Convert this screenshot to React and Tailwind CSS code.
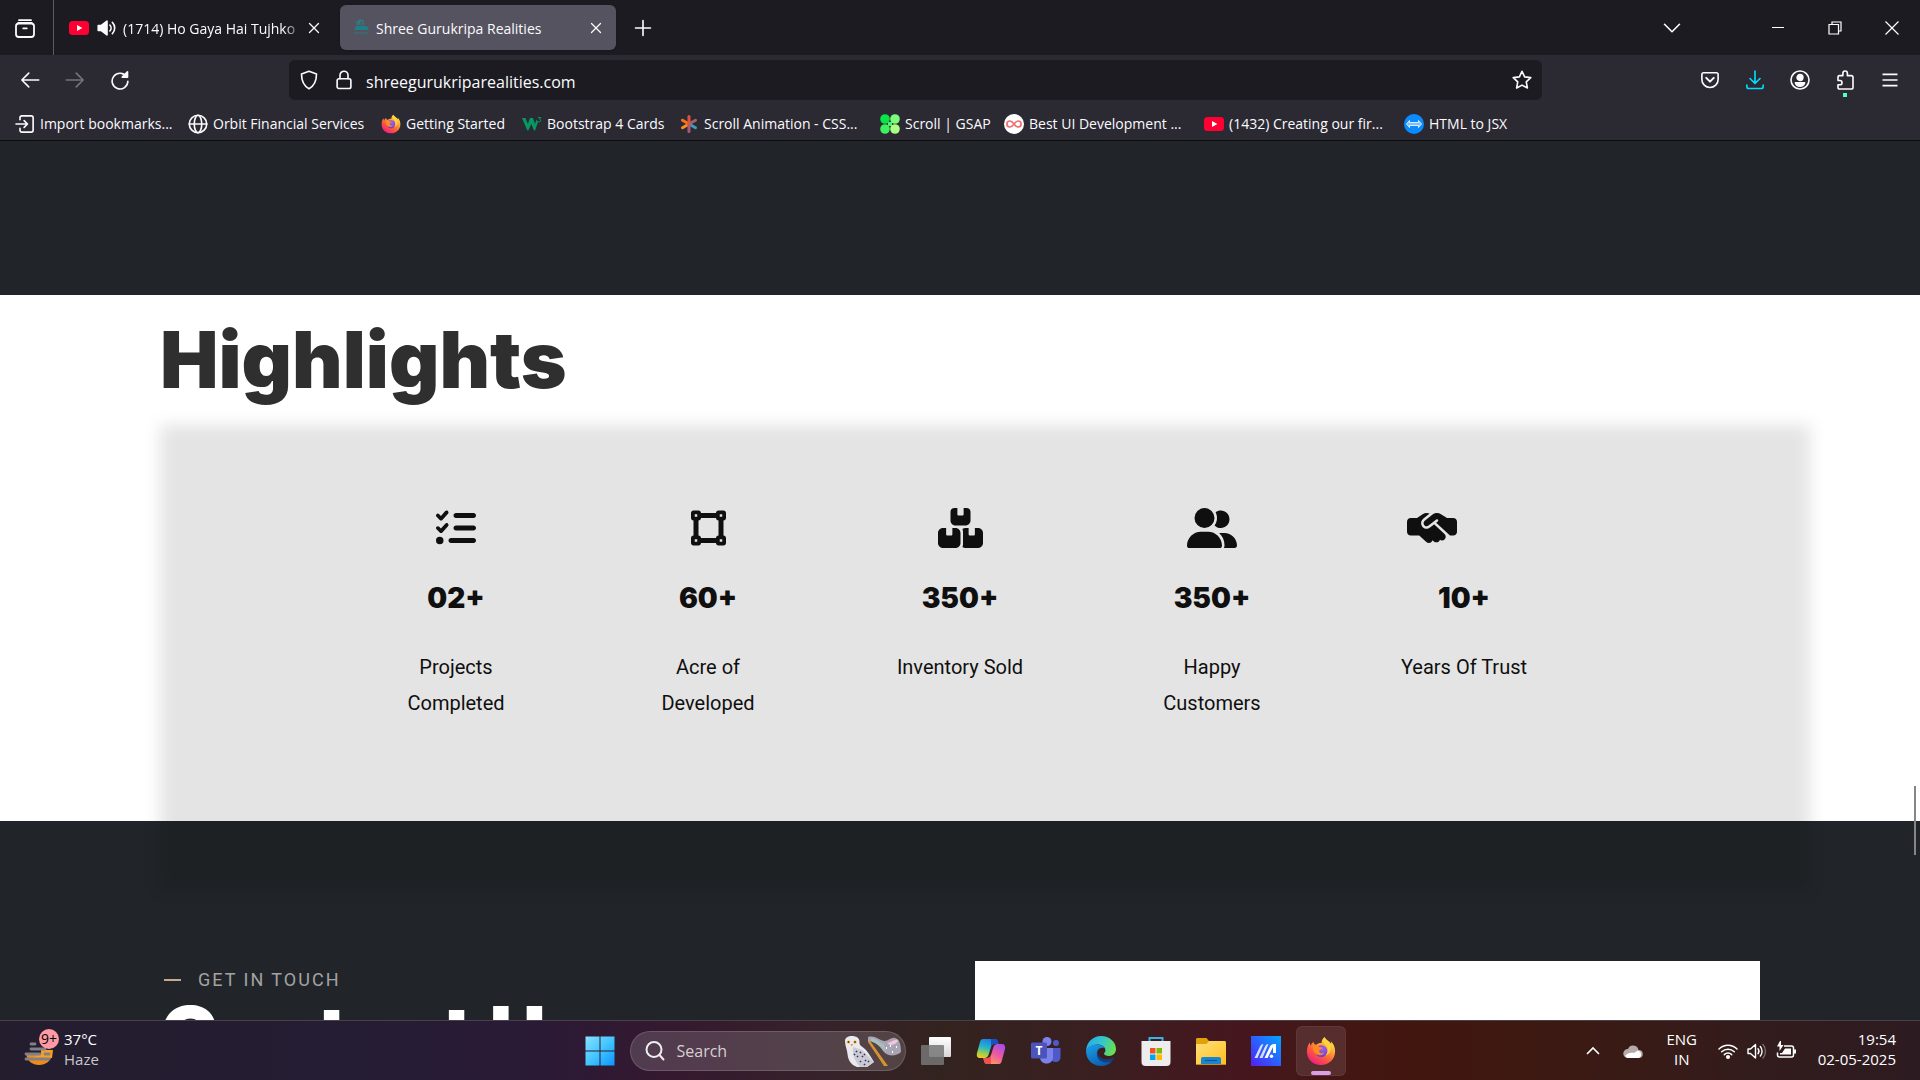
import React from "react";
import {
  FaListCheck,
  FaVectorSquare,
  FaBoxesStacked,
  FaUserGroup,
  FaHandshakeSimple,
} from "react-icons/fa6";

const line = {
  fill: "none",
  stroke: "currentColor",
  strokeWidth: 1.3,
  strokeLinecap: "round",
  strokeLinejoin: "round",
};

function Icon({ children, className = "size-5", ...rest }) {
  return (
    <svg viewBox="0 0 16 16" className={`shrink-0 ${className}`} aria-hidden="true" {...line} {...rest}>
      {children}
    </svg>
  );
}

function YoutubeIcon() {
  return (
    <svg viewBox="0 0 20 20" className="size-5 shrink-0" aria-hidden="true">
      <rect x="0" y="3" width="20" height="14" rx="3.5" fill="#ff0033" />
      <path d="M8 7l5.4 3L8 13z" fill="#fff" />
    </svg>
  );
}

function FirefoxIcon({ id, className = "size-5" }) {
  return (
    <svg viewBox="0 0 30 30" className={`shrink-0 ${className}`} aria-hidden="true">
      <defs>
        <linearGradient id={`${id}-body`} x1="0.85" y1="0.05" x2="0.25" y2="0.95">
          <stop offset="0" stopColor="#fff44f" />
          <stop offset="0.35" stopColor="#ffa436" />
          <stop offset="0.65" stopColor="#ff5a3c" />
          <stop offset="1" stopColor="#f0207f" />
        </linearGradient>
        <radialGradient id={`${id}-globe`} cx="0.6" cy="0.3" r="0.8">
          <stop offset="0" stopColor="#a45cf5" />
          <stop offset="1" stopColor="#5b3fc9" />
        </radialGradient>
      </defs>
      <path
        d="M18.5 1c-2 1.600-3 3.800-3 6-2.200-.1-4 .6-5.300 1.800C8.800 8.600 7.700 7.700 7.500 6 6 7 5 8.400 4.700 10L3.600 6.500C1.900 9 .9 12 .9 15.700.9 23.500 7.200 29 15 29s14.100-5.800 14.100-13.600c0-4.400-1.500-7.600-4.300-10.200.4 1.200.5 2 .4 2.900C23.500 4.800 20 4 18.500 1z"
        fill={`url(#${id}-body)`}
      />
      <circle cx="15.300" cy="15.300" r="6" fill={`url(#${id}-globe)`} />
      <path d="M7 10.500c2.500-1.200 5-.6 6.500.6 1.200.3 2.400.3 3 .7-.3 1.500-2.600 1.800-3.200 2.600-.4 2.400 2 3.600 5 2.400-1 2.700-6.200 3.600-9 .8-1.900-1.900-2.600-4.600-2.300-7.100z" fill="#ff8a1f" />
      <path d="M20 9c2.300 3 2.700 7.700-.4 10.400 4.800-1 6.300-6.400 4.300-10.600C22.600 6 19.500 4 18.900 2.400 16.900 5 18 7 20 9z" fill="#ffd43d" />
    </svg>
  );
}

function ImportIcon() {
  return (
    <Icon>
      <path d="M4 4.500V3a1.500 1.500 0 0 1 1.500-1.500h7.500A1.500 1.500 0 0 1 14.500 3v10a1.500 1.500 0 0 1-1.500 1.500H5.500A1.500 1.500 0 0 1 4 13v-1.500" />
      <path d="M.8 8h9M7.300 5.300 10 8l-2.700 2.700" />
    </Icon>
  );
}

function GlobeIcon() {
  return (
    <Icon>
      <circle cx="8" cy="8" r="7" />
      <ellipse cx="8" cy="8" rx="3" ry="7" />
      <path d="M1 8h14" />
    </Icon>
  );
}

function W3Icon() {
  return (
    <svg viewBox="0 0 20 20" className="size-5 shrink-0" aria-hidden="true">
      <path d="M0 4h3.500l2.300 6L8 4h3l2 6 1.500-4.500L16 8l-3 8.500h-1L9.300 10l-3 6.500h-1z" fill="#059862" />
      <path d="M16 3.500h2.800l-1.300 1.800c1.700.2 1.600 2.600-.3 2.600-.8 0-1.300-.3-1.500-.8" fill="none" stroke="#059862" strokeWidth="1" />
    </svg>
  );
}

function AsteriskIcon() {
  return (
    <svg viewBox="0 0 20 20" className="size-5 shrink-0" fill="none" strokeWidth="3" strokeLinecap="round" aria-hidden="true">
      <path d="M10 10 3.500 13.800" stroke="#ff8a1f" />
      <path d="M10 10 3.500 6.200" stroke="#f97316" />
      <path d="M10 10 16.500 6.200" stroke="#a0616f" />
      <path d="M10 10 16.500 13.800" stroke="#3b9fb5" />
      <path d="M10 10v7.500" stroke="#a75a78" />
      <path d="M10 2.500V10" stroke="#e0503f" />
    </svg>
  );
}

function GsapIcon() {
  return (
    <svg viewBox="0 0 20 20" className="size-5 shrink-0" aria-hidden="true">
      <path d="M8 8h4v4H8z" fill="#4df06a" />
      <circle cx="5" cy="5" r="4.800" fill="#0ae448" />
      <circle cx="15" cy="5" r="4.800" fill="#7dfb7a" />
      <circle cx="5" cy="15" r="4.800" fill="#3df060" />
      <circle cx="15" cy="15" r="4.800" fill="#abff84" />
    </svg>
  );
}

function InfinityIcon() {
  return (
    <svg viewBox="0 0 20 20" className="size-5 shrink-0" aria-hidden="true">
      <circle cx="10" cy="10" r="10" fill="#fff" />
      <path d="M10 10C8.600 8 7.400 7 5.900 7a3 3 0 0 0 0 6c1.500 0 2.700-1 4.100-3s2.600-3 4.100-3a3 3 0 0 1 0 6c-1.500 0-2.700-1-4.100-3z" fill="none" stroke="#f26d6d" strokeWidth="1.700" />
    </svg>
  );
}

function JsxIcon() {
  return (
    <svg viewBox="0 0 20 20" className="size-5 shrink-0" aria-hidden="true">
      <circle cx="10" cy="10" r="10" fill="#0a8cff" />
      <path d="M5.500 6.500 2.500 10l3 3.500v-2h9v2l3-3.500-3-3.500v2h-9z" fill="#7cc0ff" stroke="#fff" strokeWidth=".8" />
    </svg>
  );
}

const bookmarks = [
  { label: "Import bookmarks...", icon: <ImportIcon />, width: "w-[173px]" },
  { label: "Orbit Financial Services", icon: <GlobeIcon />, width: "w-[193px]" },
  { label: "Getting Started", icon: <FirefoxIcon id="ff-small" />, width: "w-[141px]" },
  { label: "Bootstrap 4 Cards", icon: <W3Icon />, width: "w-[157px]" },
  { label: "Scroll Animation - CSS...", icon: <AsteriskIcon />, width: "w-[201px]" },
  { label: "Scroll | GSAP", icon: <GsapIcon />, width: "w-[124px]" },
  { label: "Best UI Development ...", icon: <InfinityIcon />, width: "w-[200px]" },
  { label: "(1432) Creating our fir...", icon: <YoutubeIcon />, width: "w-[200px]" },
  { label: "HTML to JSX", icon: <JsxIcon />, width: "w-[120px]" },
];

function TabBar() {
  return (
    <div className="flex h-[55px] items-center bg-[#1c1b22]">
      <button aria-label="Recent browsing" className="flex w-[53px] justify-center pr-1">
        <Icon className="size-6" strokeWidth="1.200">
          <path d="M4 2.800h8" />
          <rect x="2" y="5" width="12" height="9" rx="1.800" />
          <path d="M3.500 4.600h9M6.800 8.200h2.400" />
        </Icon>
      </button>
      <div className="h-full w-px bg-[#5b5b66]" />
      <div className="flex h-[45px] w-[276px] items-center pr-1 pl-[15px]">
        <YoutubeIcon />
        <button aria-label="Mute tab" className="ml-2">
          <Icon>
            <path d="M1 6v4h2.500L8 13.500v-11L3.500 6z" fill="currentColor" />
            <path d="M10.300 5.600a3.500 3.500 0 0 1 0 4.800M12.300 3.500a6.400 6.400 0 0 1 0 9" />
          </Icon>
        </button>
        <span className="ml-[6px] w-[179px] pt-0.5 whitespace-nowrap [mask-image:linear-gradient(to_right,black_90%,transparent)]">
          (1714) Ho Gaya Hai Tujhko
        </span>
        <button aria-label="Close tab" className="-mr-1 ml-1">
          <Icon className="size-4"><path d="m3.500 3.500 9 9m0-9-9 9" /></Icon>
        </button>
      </div>
      <div className="ml-[10px] flex h-[45px] w-[276px] items-center rounded-md bg-[#55535f] pr-3 pl-3 shadow">
        <svg viewBox="0 0 18 20" className="h-5 w-[18px] shrink-0" aria-hidden="true">
          <path d="M5 7V4l2-1v4M8 7V2l3 1v4" fill="none" stroke="#2b7f86" strokeWidth="1.300" />
          <path d="M2 12 4 8h11l2 4z" fill="#1f7f86" />
          <path d="M2 15h14" stroke="#3c6a74" strokeWidth="1.500" />
        </svg>
        <span className="ml-[6px] grow pt-0.5 whitespace-nowrap">Shree Gurukripa Realities</span>
        <button aria-label="Close tab">
          <Icon className="size-4"><path d="m3.500 3.500 9 9m0-9-9 9" /></Icon>
        </button>
      </div>
      <button aria-label="New tab" className="ml-[17px]">
        <Icon><path d="M8 2v12M2 8h12" /></Icon>
      </button>
      <div className="ml-auto flex items-center">
        <button aria-label="List all tabs" className="mr-[49px] flex w-[56px] justify-center">
          <Icon><path d="m2 5 6 6 6-6" /></Icon>
        </button>
        <button aria-label="Minimize" className="flex w-[57px] justify-center">
          <svg viewBox="0 0 14 14" className="size-[14px]" aria-hidden="true"><path d="M1 6.500h12" stroke="#fff" /></svg>
        </button>
        <button aria-label="Restore" className="flex w-[57px] justify-center">
          <svg viewBox="0 0 14 14" className="size-[14px]" fill="none" stroke="#fff" strokeWidth="1.200" aria-hidden="true">
            <path d="M1 3.500h9.500V13H1zM4 3.500V1h9v9h-2.500" />
          </svg>
        </button>
        <button aria-label="Close window" className="flex w-[57px] justify-center">
          <svg viewBox="0 0 14 14" className="size-[14px]" stroke="#fff" strokeWidth="1.200" aria-hidden="true"><path d="m.5.5 13 13m0-13-13 13" /></svg>
        </button>
      </div>
    </div>
  );
}

function NavBar() {
  return (
    <div className="flex h-[50px] items-center justify-between">
      <div className="flex w-[289px] shrink-0 items-center gap-[25px] pl-5">
        <button aria-label="Back">
          <Icon><path d="M15 8H1.500M7 2.500 1.500 8 7 13.500" /></Icon>
        </button>
        <button aria-label="Forward" disabled className="text-[#74737c]">
          <Icon><path d="M1 8h13.500M9 2.500 14.500 8 9 13.500" /></Icon>
        </button>
        <button aria-label="Reload">
          <Icon>
            <path d="M13.300 5.500A6.300 6.300 0 1 0 14.300 9" />
            <path d="M14 1.500v4.200H9.800z" fill="currentColor" />
          </Icon>
        </button>
      </div>
      <div className="flex h-10 grow items-center rounded-md bg-[#1c1b22] px-[10px]">
        <button aria-label="Tracking protection">
          <Icon><path d="M8 1 14 3.200C14 9 12.500 12.500 8 15 3.500 12.500 2 9 2 3.200z" /></Icon>
        </button>
        <button aria-label="Site information" className="ml-[15px]">
          <Icon>
            <rect x="2.500" y="7" width="11" height="7.800" rx="1.500" />
            <path d="M4.800 7V4.200a3.200 3.200 0 0 1 6.400 0V7" />
          </Icon>
        </button>
        <input
          aria-label="Address"
          defaultValue="shreegurukriparealities.com"
          className="ml-3 min-w-0 grow bg-transparent pt-1 text-base outline-none"
        />
        <button aria-label="Bookmark this page">
          <Icon>
            <path d="m8 1 2.100 4.500 4.900.6-3.600 3.400.9 4.900L8 12.100l-4.300 2.300.9-4.900L1 6.100l4.900-.6z" />
          </Icon>
        </button>
      </div>
      <div className="flex w-[378px] shrink-0 items-center justify-end gap-[25px] pr-5">
        <button aria-label="Save to Pocket">
          <Icon>
            <path d="M1.500 3.500A1.300 1.300 0 0 1 2.800 2.200h10.400a1.300 1.300 0 0 1 1.300 1.300V7.500a6.500 6.500 0 0 1-13 0z" />
            <path d="m5 6.300 3 3 3-3" strokeWidth="1.600" />
          </Icon>
        </button>
        <button aria-label="Downloads" className="text-[#00ddff]">
          <Icon>
            <path d="M8 .8v9.700M4 6.800l4 4 4-4M1.500 12v1.300a1.500 1.500 0 0 0 1.500 1.500h10a1.500 1.500 0 0 0 1.500-1.500V12" />
          </Icon>
        </button>
        <button aria-label="Account">
          <Icon>
            <circle cx="8" cy="8" r="7.200" />
            <circle cx="8" cy="6" r="2.300" fill="currentColor" />
            <path d="M4.300 10.300h7.400c-.6 1.900-2 2.700-3.700 2.700s-3.100-.8-3.700-2.700z" fill="currentColor" />
          </Icon>
        </button>
        <button aria-label="Extensions" className="relative">
          <Icon>
            <path d="M3.800 4.500h2.500V2.600a1.800 1.800 0 0 1 3.600 0v1.900h3.300a1.200 1.200 0 0 1 1.200 1.200V14a1.200 1.200 0 0 1-1.200 1.200H3.600A1.200 1.200 0 0 1 2.400 14v-2.200h1.500a1.700 1.700 0 0 0 0-3.400H2.400V5.700a1.200 1.200 0 0 1 1.400-1.200z" />
          </Icon>
          <span className="absolute -bottom-[7px] left-2 size-1 bg-[#54ffbd]" />
        </button>
        <button aria-label="Open application menu">
          <Icon><path d="M2 3.500h12M2 8h12M2 12.500h12" strokeLinecap="butt" /></Icon>
        </button>
      </div>
    </div>
  );
}

function Browser() {
  return (
    <header className="shrink-0 border-b border-[#0c0c0d] bg-[#2b2a33] text-sm text-[#fbfbfe]">
      <TabBar />
      <NavBar />
      <nav aria-label="Bookmarks" className="flex h-[35px] items-center pt-0.5 pl-[15px]">
        {bookmarks.map(({ label, icon, width }) => (
          <a key={label} href="#" className={`flex shrink-0 items-center gap-[5px] whitespace-nowrap ${width}`}>
            {icon}
            {label}
          </a>
        ))}
      </nav>
    </header>
  );
}

const stats = [
  { value: "02+", label: "Projects Completed", icon: <FaListCheck className="size-10" /> },
  { value: "60+", label: "Acre of Developed", icon: <FaVectorSquare className="h-10 w-[35px]" /> },
  { value: "350+", label: "Inventory Sold", icon: <FaBoxesStacked className="h-10 w-[45px]" /> },
  { value: "350+", label: "Happy Customers", icon: <FaUserGroup className="h-10 w-[50px]" /> },
  { value: "10+", label: "Years Of Trust", icon: <FaHandshakeSimple className="mr-16 h-10 w-[50px]" /> },
];

function Site() {
  return (
    <main className="relative min-h-0 grow overflow-hidden bg-[#212529] font-[Roboto,sans-serif]">
      <div className="h-[154px]" />
      <section className="h-[526px] bg-white">
        <h2 className="ml-40 pt-[17px] font-[Inter,sans-serif] text-[78px] leading-[96px] font-black text-[#2f2f2f]">
          Highlights
        </h2>
        <div className="relative mt-[17px] mr-[110px] ml-40 h-[465px] pt-[83px]">
          <div className="absolute inset-0 bg-black/[.104] blur-[8px]" />
          <ul className="relative mr-[50px] grid grid-cols-5 px-[170px] text-[#0f0f0f]">
            {stats.map(({ value, label, icon }) => (
              <li key={label} className="flex flex-col items-center text-center">
                {icon}
                <strong className="mt-8 font-[Inter,sans-serif] text-[28px] leading-9 font-black">{value}</strong>
                <p className="mt-[33px] w-[140px] text-xl leading-9">{label}</p>
              </li>
            ))}
          </ul>
        </div>
      </section>
      <section className="flex justify-between pt-[140px] pr-40 pl-[164px]">
        <div>
          <p className="flex h-[38px] items-center gap-[17px] text-lg tracking-[2px] text-[#a3a3a3]">
            <span className="h-[2px] w-[17px] bg-[#c8a98c]" />
            GET IN TOUCH
          </p>
          <h2 className="-ml-1 font-[Inter,sans-serif] text-[78px] leading-[72px] font-black text-white">Contact Us</h2>
        </div>
        <div className="h-[400px] w-[785px] bg-white" />
      </section>
      <div className="absolute top-[645px] right-1 h-[69px] w-[2px] bg-[#858585]" />
    </main>
  );
}

function WindowsIcon() {
  return (
    <svg viewBox="0 0 30 30" className="size-[30px]" aria-hidden="true">
      <defs>
        <linearGradient id="win" x1="0" y1="0" x2="30" y2="30" gradientUnits="userSpaceOnUse">
          <stop offset="0" stopColor="#8ae2ff" />
          <stop offset=".5" stopColor="#43c6ff" />
          <stop offset="1" stopColor="#0a93ff" />
        </linearGradient>
      </defs>
      <path d="M.5.500h14v14H.5zM15.500.500h14v14h-14zM.5 15.500h14v14H.5zM15.500 15.500h14v14h-14z" fill="url(#win)" />
    </svg>
  );
}

function OwlArt() {
  return (
    <svg viewBox="0 0 58 32" className="h-8 w-[58px] shrink-0" aria-hidden="true">
      <path d="M2 6C2 2.500 5 1 9 1s8 2 7.500 6.500c-.1 2 .8 3 3 4.500 5 3.500 8.500 10 11.500 15l-7 5H14C8 30 5 25 4.500 19 4 14 2 11 2 6z" fill="#e9e9ee" />
      <path d="m10 12 9 3 12 12-7 5h-7c-5-5-8-13-7-20z" fill="#c9cad6" />
      <path d="m13 16 1 1m3 0 1 1m-4 3 1 1m4-1 1 1m-3 4 1 1m4-2 1 1m-2 3 1 1m3-4 1 1M11 19l1 1m9-1 1 1" stroke="#343650" strokeWidth="1.700" />
      <circle cx="5.500" cy="7" r="1.600" fill="#f5a623" />
      <circle cx="12" cy="7" r="1.600" fill="#f5a623" />
      <circle cx="5.500" cy="7" r=".8" fill="#111" />
      <circle cx="12" cy="7" r=".8" fill="#111" />
      <path d="m7.500 9 1.300 2.500L10 9z" fill="#d9962b" />
      <path d="m25 3 20 28h-4L25 7z" fill="#d7932e" />
      <path d="M25 2c7-2 11 3 16 4 4 .7 7-4 11-3 5 1 6 8 6 14-4 4-13 5-17 0-4-5-7-10-16-11z" fill="#a9a4b3" />
      <path d="M44 8c4 0 7-4 11-3-1 4-5 5-8 5z" fill="#f4c6dc" />
      <path d="M28 3c5 0 9 5 13 6l2 8c-4-4-8-8-15-11z" fill="#a7d0c8" opacity=".6" />
      <path d="M43 13h1m5 4h1m3-5h1m-7-1h1" stroke="#fff" strokeWidth="1.800" />
    </svg>
  );
}

function TaskViewIcon() {
  return (
    <svg viewBox="0 0 30 30" className="size-[30px]" aria-hidden="true">
      <defs>
        <linearGradient id="tv" x1="0" y1="0" x2="0" y2="1"><stop stopColor="#fff" /><stop offset="1" stopColor="#d6d6d6" /></linearGradient>
      </defs>
      <rect x="8" y="1" width="22" height="20" rx="1" fill="url(#tv)" />
      <rect x="0" y="9" width="23" height="20" rx="1" fill="#777" opacity=".85" />
    </svg>
  );
}

function CopilotIcon() {
  return (
    <svg viewBox="0 0 30 30" className="size-[30px]" aria-hidden="true">
      <defs>
        <linearGradient id="cp1" x1="0.500" y1="0" x2="0.200" y2="1">
          <stop stopColor="#1b7fe8" /><stop offset=".45" stopColor="#28b7c8" /><stop offset=".75" stopColor="#9bcf4a" /><stop offset="1" stopColor="#f6c828" />
        </linearGradient>
        <linearGradient id="cp2" x1="0.800" y1="0" x2="0.200" y2="1">
          <stop stopColor="#a54cf0" /><stop offset=".5" stopColor="#ee5c9a" /><stop offset="1" stopColor="#ffa25c" />
        </linearGradient>
      </defs>
      <path d="M7 3h12c2 0 2.500 1.500 3 3l.6 2h-4c-2 0-3 1-3.600 3l-2.500 8c-.7 2-2 3-4 3H4c-2.500 0-3.700-2-3-5L4 6c.5-1.800 1.500-3 3-3z" fill="url(#cp1)" />
      <path d="M15 3h4c2 0 2.500 1.500 3 3l.6 2h-4c-2 0-3 1-3.600 3z" fill="#1c4fc0" />
      <path d="M23 28H11c-2 0-2.500-1.500-3-3l-.6-3h4c2 0 3-1 3.600-3l2.500-8c.7-2 2-3 4-3H26c2.500 0 3.700 2 3 5l-3 11c-.5 2.800-1.500 4-3 4z" fill="url(#cp2)" />
      <path d="M15 28h-4c-2 0-2.500-1.500-3-3l-.6-3h4c2 0 3-1 3.600-3z" fill="#ef4f4f" />
    </svg>
  );
}

function TeamsIcon() {
  return (
    <svg viewBox="0 0 30 30" className="size-[30px]" aria-hidden="true">
      <circle cx="16" cy="5.500" r="4.500" fill="#7b83eb" />
      <circle cx="25" cy="7" r="3" fill="#5059c9" />
      <path d="M20 12h9.500v9c0 3-2 5-5 5s-4.500-2-4.500-4z" fill="#5059c9" />
      <path d="M9 12h13v9c0 4-2.500 6.500-6.500 6.500S9 25 9 21z" fill="#7b83eb" />
      <rect x="0" y="6.500" width="16" height="16" rx="1.500" fill="#4b53bc" />
      <text x="8" y="19" textAnchor="middle" fontFamily="Open Sans, sans-serif" fontWeight="700" fontSize="12" fill="#fff">T</text>
    </svg>
  );
}

function EdgeIcon() {
  return (
    <svg viewBox="0 0 30 30" className="size-[30px]" aria-hidden="true">
      <defs>
        <linearGradient id="ed1" x1="0" y1="0.300" x2="1" y2="0.600">
          <stop stopColor="#2aa9ea" /><stop offset=".5" stopColor="#35c6c9" /><stop offset="1" stopColor="#6be04a" />
        </linearGradient>
        <linearGradient id="ed2" x1="0" y1="0" x2="0.600" y2="1"><stop stopColor="#1ba0e8" /><stop offset="1" stopColor="#0c5db0" /></linearGradient>
      </defs>
      <path d="M15 0c8.500 0 15 6 15 13 0 4-3 7-7 7-3 0-5-1-5-2.200 0-1 1.400-1.300 1.400-3.500C19.400 11 16 8.500 11.500 8.500 6 8.500 1 11.500 0 15.500 0 7 6.500 0 15 0z" fill="url(#ed1)" />
      <path d="M0 15c1-4 5.500-6.500 11-6.500 4 0 6.500 1.500 7.800 3.500-5-1.500-9 2.300-7.500 7.500 1.500 5 7.500 8 14.700 5.500C23.500 28.500 19.500 30 15 30 6.500 30 0 23.500 0 15z" fill="url(#ed2)" />
      <path d="M11.300 15.500c-2 6 3 11.500 10 11 2.500-.2 4.700-1.200 6.700-3.700.4-.7 0-1.300-.8-.9-6.200 3.200-15.200 1.200-15.900-6.400z" fill="#123f82" />
    </svg>
  );
}

function StoreIcon() {
  return (
    <svg viewBox="0 0 30 30" className="size-[30px]" aria-hidden="true">
      <path d="M8.500 7V2h13v5" fill="none" stroke="#35b4e8" strokeWidth="2" />
      <path d="M.5 5h29v21a4 4 0 0 1-4 4h-21a4 4 0 0 1-4-4z" fill="#ededed" />
      <path d="M9 12h5.500v5.500H9z" fill="#f25022" />
      <path d="M15.500 12H21v5.500h-5.500z" fill="#7fba00" />
      <path d="M9 18.500h5.500V24H9z" fill="#00a4ef" />
      <path d="M15.500 18.500H21V24h-5.500z" fill="#ffb900" />
    </svg>
  );
}

function FolderIcon() {
  return (
    <svg viewBox="0 0 30 30" className="size-[30px]" aria-hidden="true">
      <defs>
        <linearGradient id="fd" x1="0" y1="0" x2="1" y2="1"><stop stopColor="#ffe07a" /><stop offset="1" stopColor="#ffbf1f" /></linearGradient>
      </defs>
      <path d="M0 3.500C0 2.500.7 2 1.500 2h9L13 5h15v8H0z" fill="#e0a10b" />
      <path d="M0 8h10.500L13 5h15.500c.8 0 1.500.6 1.500 1.500V28H0z" fill="url(#fd)" />
      <path d="M5 28v-5c0-1.300.8-2 2-2h16c1.200 0 2 .7 2 2v5z" fill="#1a86d0" />
      <path d="M9 24.500h12" stroke="#0b5a96" strokeWidth="1.200" />
      <path d="M0 28h30v1H0z" fill="#c98d08" />
    </svg>
  );
}

function MyAsusIcon() {
  return (
    <svg viewBox="0 0 30 30" className="size-[30px]" aria-hidden="true">
      <defs>
        <linearGradient id="ma" x1="0" y1="1" x2="1" y2="0"><stop stopColor="#5420f0" /><stop offset=".5" stopColor="#2b60ff" /><stop offset="1" stopColor="#00a8ff" /></linearGradient>
      </defs>
      <rect width="30" height="30" fill="url(#ma)" />
      <path d="M3.500 22 9 10.500C9.800 8.800 11 8 12.500 8L6.500 22zM8.500 22 14 10.500C14.800 8.800 16 8 17.500 8l-6 14z" fill="#d4e0ff" />
      <path d="M13.500 22 19 10.500C20 8.500 21.500 8 25 8v9h-3v-6l-5.500 11z" fill="#fff" />
      <circle cx="20.500" cy="20.300" r="1.700" fill="#fff" />
    </svg>
  );
}

const apps = [
  { name: "Task view", icon: <TaskViewIcon /> },
  { name: "Copilot", icon: <CopilotIcon /> },
  { name: "Teams", icon: <TeamsIcon /> },
  { name: "Edge", icon: <EdgeIcon /> },
  { name: "Microsoft Store", icon: <StoreIcon /> },
  { name: "File Explorer", icon: <FolderIcon /> },
  { name: "MyASUS", icon: <MyAsusIcon /> },
];

function Taskbar() {
  return (
    <footer className="grid h-[60px] shrink-0 grid-cols-[1fr_auto_1fr] items-center border-t border-[#4a4148] bg-[linear-gradient(90deg,#231d2e_0%,#241d33_17%,#2a1a36_28%,#35192f_35%,#36222a_43%,#33231f_49%,#3a1f20_57%,#45171e_64%,#42160f_73%,#3b1a13_82%,#331c1c_91%,#2c1b21_100%)] text-[15px] leading-5 text-white">
      <button className="flex items-center gap-[10px] pb-1 pl-6 text-left">
        <span className="relative">
          <svg viewBox="0 0 30 36" className="h-9 w-[30px]" aria-hidden="true">
            <path d="M2 23h26c-1 7-6 11-13 11S3.500 30 2 23z" fill="#f08a1c" />
            <path d="M17 23v-4h12l-1 8H8z" fill="#f6a11f" />
            <path d="M7 13h4M7 18h14M2 23h14M21 23h4M2 28h23" stroke="#81808a" strokeWidth="2.800" strokeLinecap="round" />
          </svg>
          <span className="absolute -top-[2px] -right-[5px] flex size-5 items-center justify-center rounded-full bg-[#ff99a4] text-sm text-black">9+</span>
        </span>
        <span className="flex flex-col">
          <span>37°C</span>
          <span className="text-[#c9c6cc]">Haze</span>
        </span>
      </button>
      <div className="flex items-center gap-[5px]">
        <button aria-label="Start" className="flex size-[50px] items-center justify-center"><WindowsIcon /></button>
        <label className="flex h-10 w-[276px] items-center rounded-full border border-white/15 bg-white/15 pr-1 pl-[14px]">
          <svg viewBox="0 0 20 20" className="size-5 shrink-0" fill="none" stroke="#eee" strokeWidth="2" strokeLinecap="round" aria-hidden="true">
            <circle cx="9" cy="8.500" r="7.500" />
            <path d="m14.500 14 4 4.500" />
          </svg>
          <input aria-label="Search" placeholder="Search" className="ml-3 min-w-0 grow bg-transparent text-base outline-none placeholder:text-[#d6cfd3]" />
          <OwlArt />
        </label>
        {apps.map(({ name, icon }) => (
          <button key={name} aria-label={name} className="flex size-[50px] items-center justify-center">{icon}</button>
        ))}
        <button aria-label="Firefox" className="relative flex size-[50px] items-center justify-center rounded-md border border-white/5 bg-white/10">
          <FirefoxIcon id="ff-task" className="size-[30px]" />
          <span className="absolute bottom-0 h-1 w-5 rounded-full bg-[#d9a0e8]" />
        </button>
      </div>
      <div className="flex items-center justify-end pr-6">
        <button aria-label="Show hidden icons">
          <svg viewBox="0 0 16 16" className="size-4" fill="none" stroke="#fff" strokeWidth="1.600" aria-hidden="true"><path d="m2 11 6-6 6 6" /></svg>
        </button>
        <button aria-label="OneDrive" className="ml-[22px]">
          <svg viewBox="0 0 20 20" className="size-5" aria-hidden="true">
            <path d="M5 8a5.500 5.500 0 0 1 10.500 1A4 4 0 0 1 16 17H4.500A4.500 4.500 0 0 1 5 8z" fill="#b5aaa8" />
            <path d="M2 15c2-3 6-4 9-3l4-2.500a4 4 0 0 1 1 7.500H4.500A4 4 0 0 1 2 15z" fill="#fff" />
          </svg>
        </button>
        <button className="ml-[22px] w-[34px] pb-1 text-center">ENG IN</button>
        <button aria-label="Network, volume and battery" className="ml-[19px] flex items-center gap-[9px]">
          <svg viewBox="0 0 20 20" className="size-5" fill="none" stroke="#fff" strokeWidth="1.500" strokeLinecap="round" aria-hidden="true">
            <path d="M1 8a12.500 12.500 0 0 1 18 0M3.700 10.800a9 9 0 0 1 12.600 0M6.300 13.600a5.200 5.200 0 0 1 7.400 0" />
            <circle cx="10" cy="16" r="1.300" fill="#fff" />
          </svg>
          <svg viewBox="0 0 20 20" className="size-5" fill="none" stroke="#fff" strokeWidth="1.400" strokeLinecap="round" strokeLinejoin="round" aria-hidden="true">
            <path d="M1 8v4.500h2.500L8.500 17V3.500L3.500 8z" />
            <path d="M11 7.800a4 4 0 0 1 0 5M13.300 5.500a7.300 7.300 0 0 1 0 9.500" />
            <path d="M16 3.500a10.500 10.500 0 0 1 0 13.500" opacity=".35" />
          </svg>
          <svg viewBox="0 0 20 20" className="size-5" fill="none" stroke="#fff" strokeWidth="1.500" aria-hidden="true">
            <path d="M8 5h7.500a2 2 0 0 1 2 2v7a2 2 0 0 1-2 2h-12a2 2 0 0 1-2-2v-2.500" />
            <path d="M19 8.500v4" strokeWidth="2" />
            <path d="M9 7.500h6v6H4V12h2z" fill="#fff" stroke="none" />
            <path d="M4 0 1 5.500h2.500V10L7.500 4H5V0z" fill="#fff" stroke="none" />
          </svg>
        </button>
        <button className="ml-[22px] pb-1 text-right whitespace-nowrap">
          <span className="block">19:54</span>
          <span className="block">02-05-2025</span>
        </button>
      </div>
    </footer>
  );
}

export default function App() {
  return (
    <div className="flex h-screen flex-col overflow-hidden font-['Open_Sans','Noto_Sans',sans-serif]">
      <Browser />
      <Site />
      <Taskbar />
    </div>
  );
}
